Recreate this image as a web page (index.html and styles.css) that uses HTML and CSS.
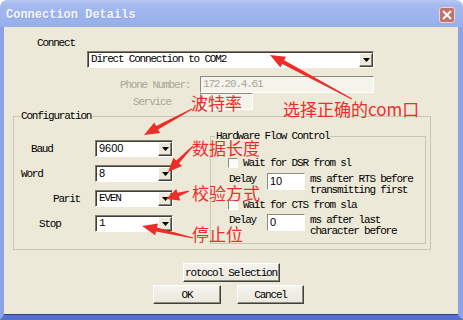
FILE: index.html
```html
<!DOCTYPE html>
<html lang="zh">
<head>
    <meta charset="UTF-8">
    <meta name="viewport" content="width=device-width, initial-scale=1.0">
    <title>Connection Details</title>
    <link rel="stylesheet" href="styles.css">
</head>
<body>

    <div class="window">
        <div class="titlebar">
            <span class="title">Connection Details</span>
            <span class="close">
                <svg width="10" height="10" viewBox="0 0 10 10">
                    <path d="M1 1 L9 9 M9 1 L1 9" stroke="#ffffff" stroke-width="2" fill="none"/>
                </svg>
            </span>
        </div>

        <div class="frame">
            <div class="client">
                <div class="connect-label">Connect</div>
                <div class="combo combo-wide">
                    <span class="combo-text">Direct Connection to COM2</span>
                    <span class="drop"><svg width="7" height="4" viewBox="0 0 7 4"><polygon points="0,0 7,0 3.5,4" fill="#000"/></svg></span>
                </div>

                <div class="field-row phone">
                    <span class="dim-label">Phone Number:</span>
                    <span class="edit disabled">172.20.4.61</span>
                </div>
                <div class="field-row service">
                    <span class="dim-label">Service</span>
                    <span class="edit disabled"></span>
                </div>

                <fieldset class="group config">
                    <legend>Configuration</legend>
                    <div class="config-body">
                        <div class="port-list">
                            <div class="port-row">
                                <span class="port-label baud">Baud</span>
                                <div class="combo combo-small">
                                    <span class="combo-text sans">9600</span>
                                    <span class="drop"><svg width="7" height="4" viewBox="0 0 7 4"><polygon points="0,0 7,0 3.5,4" fill="#000"/></svg></span>
                                </div>
                            </div>
                            <div class="port-row">
                                <span class="port-label word">Word</span>
                                <div class="combo combo-small">
                                    <span class="combo-text sans">8</span>
                                    <span class="drop"><svg width="7" height="4" viewBox="0 0 7 4"><polygon points="0,0 7,0 3.5,4" fill="#000"/></svg></span>
                                </div>
                            </div>
                            <div class="port-row">
                                <span class="port-label parit">Parit</span>
                                <div class="combo combo-small">
                                    <span class="combo-text">EVEN</span>
                                    <span class="drop"><svg width="7" height="4" viewBox="0 0 7 4"><polygon points="0,0 7,0 3.5,4" fill="#000"/></svg></span>
                                </div>
                            </div>
                            <div class="port-row">
                                <span class="port-label stop">Stop</span>
                                <div class="combo combo-small">
                                    <span class="combo-text">1</span>
                                    <span class="drop"><svg width="7" height="4" viewBox="0 0 7 4"><polygon points="0,0 7,0 3.5,4" fill="#000"/></svg></span>
                                </div>
                            </div>
                        </div>

                        <fieldset class="group hfc">
                            <legend>Hardware Flow Control</legend>
                            <div class="check-row first">
                                <span class="check"></span>
                                <span>Wait for DSR from sl</span>
                            </div>
                            <div class="delay-row">
                                <span class="delay-label">Delay</span>
                                <span class="edit delay-edit">10</span>
                                <span class="delay-note">ms after RTS before<br>transmitting first</span>
                            </div>
                            <div class="check-row second">
                                <span class="check"></span>
                                <span>Wait for CTS from sla</span>
                            </div>
                            <div class="delay-row second">
                                <span class="delay-label">Delay</span>
                                <span class="edit delay-edit">0</span>
                                <span class="delay-note">ms after last<br>character before</span>
                            </div>
                        </fieldset>
                    </div>
                </fieldset>

                <div class="actions">
                    <button class="btn btn-protocol">rotocol Selection</button>
                    <div class="btn-row">
                        <button class="btn btn-ok">OK</button>
                        <button class="btn btn-cancel">Cancel</button>
                    </div>
                </div>
            </div>
        </div>

        <!-- anotaciones en rojo encima del diálogo -->
        <div class="notes">
            <svg width="463" height="320" viewBox="0 0 463 320">
                <g fill="#ec2d28">
                    <polygon points="352.2,98.6 284.2,60.3 286.0,56.8 270,55 280.4,67.4 282.3,63.9 351.8,99.4"/>
                    <polygon points="191.8,108.6 156.2,126.1 154.3,122.6 144,135 160.1,133.1 158.1,129.6 192.2,109.4"/>
                    <polygon points="192.6,145.7 176.3,160.5 173.4,157.8 168,172 182.0,166.1 179.1,163.3 193.4,146.4"/>
                    <polygon points="188.8,190.5 177.6,192.8 176.3,189.1 166,199 180.3,200.4 178.9,196.6 189.2,191.5"/>
                    <polygon points="193.1,237.5 157.1,227.5 158.0,223.6 142,226 155.2,235.3 156.1,231.4 192.9,238.5"/>
                </g>
            </svg>
            <span class="note note-com">选择正确的com口</span>
            <span class="note note-baud">波特率</span>
            <span class="note note-word">数据长度</span>
            <span class="note note-parity">校验方式</span>
            <span class="note note-stop">停止位</span>
        </div>
    </div>

</body>
</html>
```

FILE: styles.css
```css
body {
    margin: 0;
    font-family: "Liberation Mono", "DejaVu Sans Mono", monospace;
    font-size: 11px;
    letter-spacing: -1.2px;
    color: #000;
    background-color: #ffffff;
}

.window {
    position: relative;
    width: 463px;
    height: 320px;
    display: flex;
    flex-direction: column;
    overflow: hidden;
}

/* barra de título */
.titlebar {
    height: 27px;
    flex: none;
    box-sizing: border-box;
    display: flex;
    justify-content: space-between;
    align-items: center;
    padding: 3px 8px 0 6px;
    background: linear-gradient(#b7c8f3, #a3b9ee 20%, #9cb3ec 70%, #96aeea);
    border-radius: 7px 7px 0 0;
}

.title {
    font-size: 12px;
    font-weight: bold;
    letter-spacing: 0;
    color: #f3f6ff;
    text-shadow: 1px 1px 0 #8ca2dc;
}

.close {
    width: 16px;
    height: 16px;
    box-sizing: border-box;
    display: flex;
    align-items: center;
    justify-content: center;
    background-color: #c5716b;
    border: 1px solid #ecd4d2;
    border-radius: 3px;
}

.frame {
    flex: 1;
    display: flex;
    border-left: 4px solid #8ba3e6;
    border-right: 5px solid #8ba3e6;
    border-bottom: 5px solid #5770cc;
}

.client {
    flex: 1;
    background-color: #ece9d8;
    padding-top: 10px;
    box-shadow: inset 0 -1px 0 #2e3f8e;
}

.connect-label {
    margin-left: 33px;
    line-height: 12px;
}

/* combos */
.combo {
    display: flex;
    box-sizing: border-box;
    height: 17px;
    background-color: #ffffff;
    border: 1px solid;
    border-color: #7f7d70 #ffffff #ffffff #7f7d70;
    box-shadow: inset 1px 1px 0 #3f3e36;
}

.combo-text {
    flex: 1;
    padding-left: 3px;
    line-height: 15px;
    white-space: nowrap;
    overflow: hidden;
}

.sans {
    font-family: "Liberation Sans", Arial, sans-serif;
    letter-spacing: 0;
}

.drop {
    width: 14px;
    margin: 1px 0 0 0;
    box-sizing: border-box;
    display: flex;
    align-items: center;
    justify-content: center;
    background-color: #ece9d8;
    border: 1px solid;
    border-color: #ffffff #404040 #404040 #ffffff;
    box-shadow: inset -1px -1px 0 #8a8878;
}

.combo-wide {
    margin: 2px 0 0 83px;
    width: 287px;
}

.combo-small {
    width: 78px;
}

/* teléfono y servicio */
.field-row {
    display: flex;
    align-items: center;
}

.phone {
    margin-top: 8px;
}

.dim-label {
    color: #a9a695;
}

.phone .dim-label {
    margin-left: 116px;
    width: 80px;
}

.service .dim-label {
    margin-left: 129px;
    width: 67px;
}

.edit {
    box-sizing: border-box;
    height: 17px;
    border: 1px solid;
    border-color: #8d8b7d #ffffff #ffffff #8d8b7d;
    background-color: #ffffff;
    line-height: 15px;
    padding-left: 2px;
}

.edit.disabled {
    width: 174px;
    background-color: #f4f3ec;
    color: #a9a695;
}

.service .edit.disabled {
    width: 53px;
}

/* grupos */
.group {
    margin: 0;
    padding: 0;
    border: 1px solid #c9c6b4;
    min-inline-size: 0;
}

.group legend {
    padding: 0 1px;
    line-height: 12px;
}

.config {
    margin-left: 9px;
    width: 418px;
    box-sizing: border-box;
}

.config legend {
    margin-left: 6px;
}

.config-body {
    display: flex;
    height: 127px;
}

.port-list {
    width: 196px;
    padding-top: 18px;
    display: flex;
    flex-direction: column;
    gap: 8px;
}

.port-row {
    display: flex;
    align-items: center;
}

.port-label {
    width: 81px;
    box-sizing: border-box;
}

.baud { padding-left: 17px; }
.word { padding-left: 7px; }
.parit { padding-left: 39px; }
.stop { padding-left: 25px; }

.hfc {
    margin-top: 8px;
    width: 216px;
    height: 114px;
    box-sizing: border-box;
}

.hfc legend {
    margin-left: 4px;
}

.check-row {
    display: flex;
    align-items: center;
    height: 12px;
    margin-left: 17px;
}

.check-row.first {
    margin-top: 15px;
}

.check-row.second {
    margin-top: 3px;
}

.check {
    width: 10px;
    height: 10px;
    box-sizing: border-box;
    border: 1px solid;
    border-color: #8a887a #ffffff #ffffff #8a887a;
    background-color: #fbfaf6;
    margin-right: 5px;
}

.delay-row {
    display: flex;
    align-items: flex-start;
    margin: 4px 0 0 18px;
}

.delay-row.second {
    margin-top: 3px;
}

.delay-label {
    width: 38px;
    line-height: 13px;
}

.delay-edit {
    width: 38px;
    font-family: "Liberation Sans", Arial, sans-serif;
    letter-spacing: 0;
}

.delay-note {
    margin-left: 5px;
    padding-top: 1px;
    line-height: 11px;
}

/* botones */
.actions {
    display: flex;
    flex-direction: column;
    align-items: center;
    gap: 3px;
    margin-top: 13px;
}

.btn-row {
    display: flex;
    gap: 16px;
    padding-right: 5px;
}

.btn {
    box-sizing: border-box;
    height: 19px;
    padding: 0;
    font: inherit;
    letter-spacing: inherit;
    color: #000;
    background: linear-gradient(#f4f3ee, #ebe8db);
    border: 1px solid;
    border-color: #ffffff #404040 #404040 #ffffff;
    box-shadow: inset -1px -1px 0 #8c8a7c;
    white-space: nowrap;
}

.btn-protocol { width: 97px; }
.btn-ok { width: 68px; }
.btn-cancel { width: 67px; }

/* notas en rojo */
.notes {
    position: absolute;
    left: 0;
    top: 0;
    width: 463px;
    height: 320px;
    pointer-events: none;
    font-family: "Noto Sans CJK SC", "Noto Sans", sans-serif;
    font-size: 17px;
    letter-spacing: 0;
    color: #ec2d28;
}

.notes svg {
    position: absolute;
    left: 0;
    top: 0;
}

.note {
    position: absolute;
    line-height: 17px;
    white-space: nowrap;
}

.note-com { left: 283px; top: 100px; }
.note-baud { left: 191px; top: 94px; }
.note-word { left: 192px; top: 139px; }
.note-parity { left: 192px; top: 184px; }
.note-stop { left: 192px; top: 225px; }
```
